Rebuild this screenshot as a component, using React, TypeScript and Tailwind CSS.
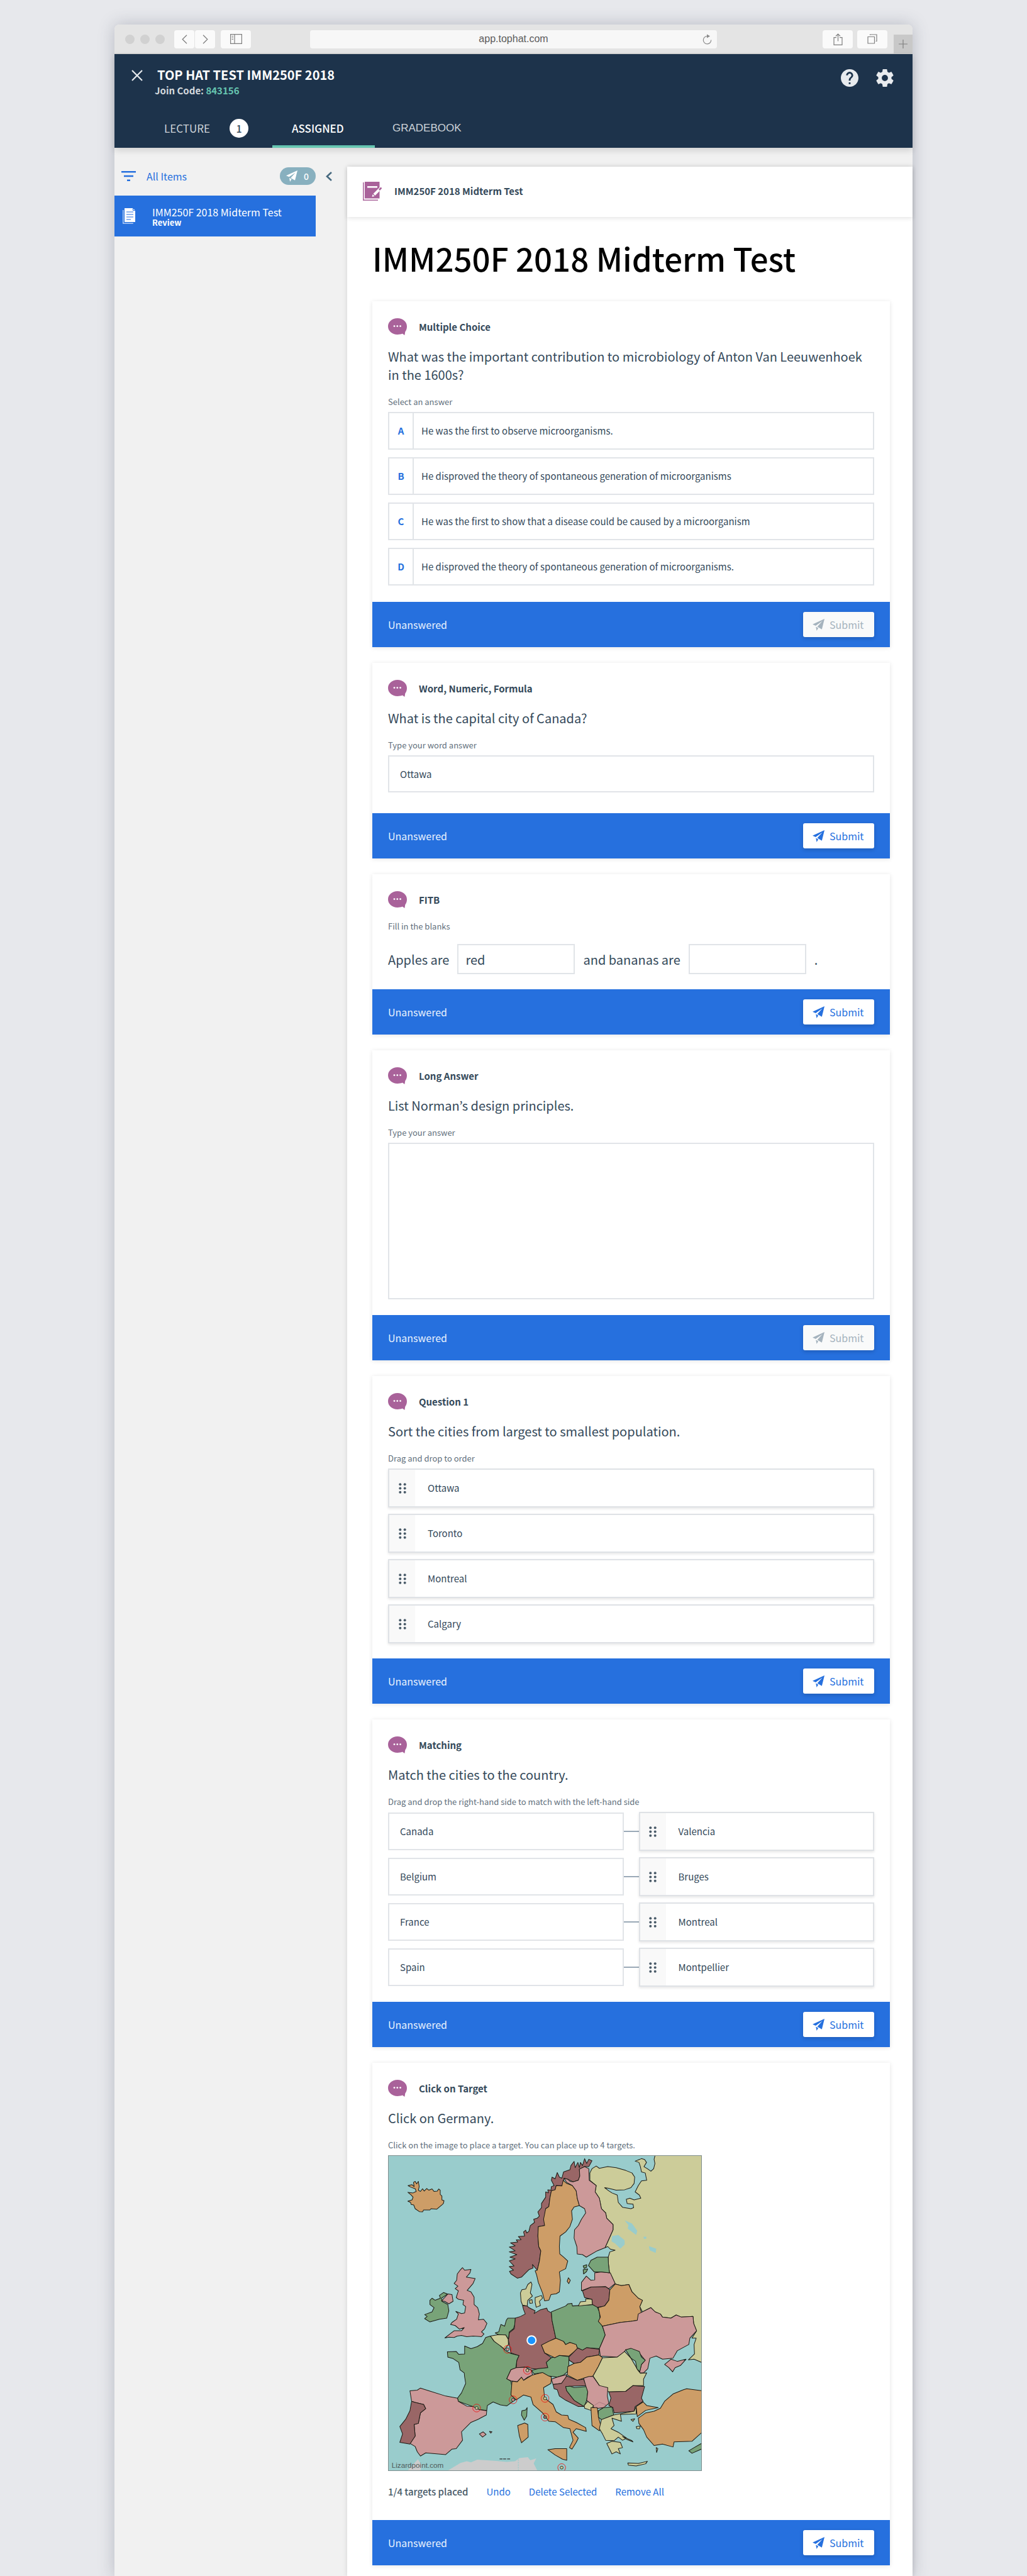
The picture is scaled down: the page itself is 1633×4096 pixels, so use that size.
import { useState, type ReactNode } from "react";

const SANS = "font-['Noto_Sans_CJK_KR',sans-serif]";
const SYSTEM = "font-['Liberation_Sans',sans-serif]";
const FIELD = "border-2 border-[#e1e4e8] bg-white text-[#34495a]";

/* ---------- icons ---------- */

function Plane({ className }: { className: string }) {
  return (
    <svg viewBox="0 0 20 20" className={className} fill="currentColor" aria-hidden="true">
      <path d="M20 0 0 9.2l5.2 2.3L16.4 3.8 8 13.2l7.6 4.3z" />
      <path d="M5.6 13.2 6.8 20l2.8-4.6z" />
    </svg>
  );
}

function Bubble() {
  return (
    <svg viewBox="0 0 30 27" className="h-[27px] w-[30px] shrink-0" aria-hidden="true">
      <path
        fill="#a9629a"
        d="M15 0c8.300 0 15 5.600 15 13 0 3.600-1 6.400-2.700 8.600L26.400 27l-3.600-2.400C20.500 25.600 17.800 26 15 26 6.700 26 0 20.400 0 13S6.700 0 15 0z"
      />
      <circle cx="10" cy="12.600" r="1.400" fill="#fff" />
      <circle cx="14.800" cy="12.600" r="1.400" fill="#fff" />
      <circle cx="19.600" cy="12.600" r="1.400" fill="#fff" />
    </svg>
  );
}

function Grip() {
  return (
    <svg viewBox="0 0 12 17" className="h-[17px] w-3" fill="#4a5b69" aria-hidden="true">
      {[2.3, 8.5, 14.7].map((y) => (
        <g key={y}>
          <circle cx="2.300" cy={y} r="2" />
          <circle cx="9.700" cy={y} r="2" />
        </g>
      ))}
    </svg>
  );
}

/* ---------- browser frame ---------- */

function ChromeButton({ label, className, children }: { label: string; className: string; children: ReactNode }) {
  return (
    <button
      aria-label={label}
      className={`flex h-[29px] items-center justify-center rounded-[4px] bg-[#fafafa] text-[#808080] ${className}`}
    >
      {children}
    </button>
  );
}

function Toolbar() {
  return (
    <div className="flex h-[47px] items-center rounded-t-[8px] border-b border-[#cfcfcf] bg-[#e4e4e4]">
      <div className="flex flex-1 items-center">
        <div className="ml-[17px] flex gap-[9px]">
          <span className="size-[15px] rounded-full bg-[#d1d1d1]" />
          <span className="size-[15px] rounded-full bg-[#d1d1d1]" />
          <span className="size-[15px] rounded-full bg-[#d1d1d1]" />
        </div>
        <div className="ml-[15px] flex gap-px">
          <ChromeButton label="Back" className="w-8">
            <svg viewBox="0 0 9 15" className="h-[15px] w-[9px]" fill="none" stroke="currentColor" strokeWidth="1.300">
              <path d="M8 .7 1.200 7.500 8 14.300" />
            </svg>
          </ChromeButton>
          <ChromeButton label="Forward" className="w-8">
            <svg viewBox="0 0 9 15" className="h-[15px] w-[9px]" fill="none" stroke="currentColor" strokeWidth="1.300">
              <path d="M1 .7 7.800 7.500 1 14.300" />
            </svg>
          </ChromeButton>
        </div>
        <ChromeButton label="Sidebar" className="ml-[9px] w-12">
          <svg viewBox="0 0 19 16" className="h-4 w-[19px]" fill="none" stroke="currentColor" strokeWidth="1.200">
            <path d="M.6.6h17.800v14.800H.6zM7 .6v14.800M2.500 3.500h2.500M2.500 6h2.500M2.500 8.500h2.500" />
          </svg>
        </ChromeButton>
      </div>
      <div className="relative flex h-[29px] w-[51%] items-center justify-center rounded-[4px] bg-[#f7f7f7]">
        <span className={`${SYSTEM} text-[16px] leading-5 text-[#5c5c5c]`}>app.tophat.com</span>
        <button aria-label="Reload" className="absolute right-2 text-[#8a8a8a]">
          <svg viewBox="0 0 15 17" className="h-[17px] w-[15px]" fill="none" stroke="currentColor" strokeWidth="1.200">
            <path d="M7.500 3.500A6.200 6.200 0 1 0 13.700 9.500" />
            <path d="M7 .5 12 3.500 7 6.500z" fill="currentColor" stroke="none" />
          </svg>
        </button>
      </div>
      <div className="flex h-full flex-1 items-center justify-end">
        <ChromeButton label="Share" className="w-12">
          <svg viewBox="0 0 15 19" className="h-[19px] w-[15px]" fill="none" stroke="currentColor" strokeWidth="1.200">
            <path d="M5 6.600H1v11.700h13V6.600h-4M7.500 12.500V1M4 4.500 7.500 1 11 4.500" />
          </svg>
        </ChromeButton>
        <ChromeButton label="Tabs" className="ml-[7px] w-12">
          <svg viewBox="0 0 16 16" className="size-4" fill="none" stroke="currentColor" strokeWidth="1.200">
            <path d="M1 4.500h10.500V15H1zM4.500 2V1H15v10.500h-1.500" />
          </svg>
        </ChromeButton>
        <button
          aria-label="New tab"
          className="ml-[10px] flex h-[30px] w-[30px] items-center justify-center self-end bg-[#c8c8c8] text-[#808080]"
        >
          <svg viewBox="0 0 14 14" className="size-[14px]" stroke="currentColor" strokeWidth="1.200">
            <path d="M7 0v14M0 7h14" />
          </svg>
        </button>
      </div>
    </div>
  );
}

function AppHeader() {
  return (
    <header className="relative z-10 flex h-[149px] flex-col justify-between bg-[#1d334b] shadow-[0_4px_10px_rgba(0,0,0,0.14)]">
      <div className="flex justify-between pl-[27px] pr-[30px] pt-[22px]">
        <div className="flex">
          <button aria-label="Close" className="mt-[3px] h-[18px] w-[18px] text-[#e8ebee]">
            <svg viewBox="0 0 18 18" className="size-[18px]" stroke="currentColor" strokeWidth="2.200">
              <path d="M1 1l16 16M17 1 1 17" />
            </svg>
          </button>
          <div className="ml-[19px]">
            <h1 className="pl-1 text-[20px] font-bold leading-[22px] text-white">TOP HAT TEST IMM250F 2018</h1>
            <p className="mt-1 text-[15px] font-bold leading-5 text-[#d3d8dd]">
              Join Code: <span className="text-[#66c5b0]">843156</span>
            </p>
          </div>
        </div>
        <div className="flex gap-7 pt-[2px] text-[#e8ebee]">
          <button aria-label="Help" className="size-[28px] self-start">
            <svg viewBox="2 2 20 20" className="size-[28px]" fill="currentColor">
              <path d="M12 2C6.480 2 2 6.480 2 12s4.480 10 10 10 10-4.480 10-10S17.520 2 12 2zm1 17h-2v-2h2v2zm2.070-7.750-.9.920C13.450 12.900 13 13.500 13 15h-2v-.5c0-1.100.450-2.100 1.170-2.830l1.240-1.260c.370-.360.590-.860.590-1.410 0-1.100-.9-2-2-2s-2 .9-2 2H8c0-2.210 1.790-4 4-4s4 1.790 4 4c0 .880-.360 1.680-.930 2.250z" />
            </svg>
          </button>
          <button aria-label="Settings" className="size-[28px] self-start">
            <svg viewBox="2 2 20 20" className="size-[28px]" fill="currentColor">
              <path d="M19.430 12.980c.040-.320.070-.640.070-.980s-.030-.660-.070-.980l2.110-1.650c.190-.150.240-.420.120-.640l-2-3.460c-.120-.220-.390-.300-.610-.220l-2.490 1c-.520-.400-1.080-.730-1.690-.980l-.380-2.650C14.460 2.180 14.250 2 14 2h-4c-.250 0-.460.180-.490.420l-.380 2.650c-.610.250-1.170.590-1.690.980l-2.490-1c-.230-.090-.490 0-.610.220l-2 3.460c-.130.220-.070.490.120.640l2.110 1.650c-.040.320-.070.650-.070.980s.030.660.070.980l-2.110 1.650c-.190.150-.240.420-.120.640l2 3.460c.120.220.390.300.610.220l2.490-1c.520.400 1.080.730 1.690.980l.380 2.650c.030.240.240.420.490.420h4c.250 0 .460-.180.490-.420l.380-2.650c.610-.250 1.170-.590 1.690-.980l2.490 1c.230.090.490 0 .610-.220l2-3.460c.120-.220.070-.490-.120-.640l-2.110-1.650zM12 15.500c-1.930 0-3.500-1.570-3.500-3.500s1.570-3.500 3.500-3.500 3.500 1.570 3.500 3.500-1.570 3.500-3.500 3.500z" />
            </svg>
          </button>
        </div>
      </div>
      <nav className="flex h-[62px] pl-[79px] text-[17px] leading-6">
        <a href="#lecture" className="flex w-[172px] items-center justify-between pr-[38px] text-[#cdd3d9]">
          LECTURE
          <span className="flex size-[30px] items-center justify-center rounded-full bg-white text-[16px] font-medium leading-6 text-[#34495a]">
            1
          </span>
        </a>
        <a
          href="#assigned"
          className="flex w-[163px] items-center border-b-4 border-[#66c5b0] pl-[31px] pt-1 font-medium text-white"
        >
          ASSIGNED
        </a>
        <a href="#gradebook" className={`${SYSTEM} flex items-center pl-7 text-[#cdd3d9]`}>
          GRADEBOOK
        </a>
      </nav>
    </header>
  );
}

function Sidebar() {
  return (
    <aside className="w-[370px] shrink-0 pt-[31px]">
      <div className="flex h-[28px] items-center pl-[11px]">
        <svg viewBox="0 0 23 16" className="h-4 w-[23px]" fill="#2670de" aria-hidden="true">
          <path d="M0 0h23v2.600H0zM4 6.700h15v2.600H4zM9 13.400h5V16H9z" />
        </svg>
        <a href="#items" className="ml-[17px] flex-1 text-[16px] leading-6 text-[#2670de]">
          All Items
        </a>
        <span className="flex h-[28px] w-[57px] items-center justify-between rounded-full bg-[#88b0bf] pl-[10px] pr-[11px] text-[14px] font-medium leading-5 text-white">
          <Plane className="size-[18px]" />0
        </span>
        <button aria-label="Collapse" className="ml-4 mr-[24px] text-[#46697f]">
          <svg viewBox="0 0 10 15" className="h-[15px] w-[10px]" fill="none" stroke="currentColor" strokeWidth="2.600">
            <path d="M9 1 2 7.500 9 14" />
          </svg>
        </button>
      </div>
      <a href="#midterm" className="mt-[17px] flex h-[65px] w-[320px] items-center bg-[#2670de] pl-[13px] text-white">
        <svg viewBox="0 0 20 25" className="h-[25px] w-5 shrink-0" aria-hidden="true">
          <path d="M.8 3v21.200h16" fill="none" stroke="#cfe0fa" strokeWidth="1.200" />
          <path d="M3 0h13l4 3.500V22H3z" fill="#fff" />
          <path d="M6 6h11M6 10h11M6 14h11M6 18h7" stroke="#6d9fec" strokeWidth="1.400" />
          <path d="M16.500 0v3.500H20" fill="none" stroke="#2670de" strokeWidth="1" />
        </svg>
        <span className="ml-[27px] flex flex-col">
          <span className="text-[16px] leading-5">IMM250F 2018 Midterm Test</span>
          <span className="text-[13px] font-bold leading-[14px]">Review</span>
        </span>
      </a>
    </aside>
  );
}

/* ---------- questions ---------- */

function Card({
  title,
  question,
  hint,
  hintFor,
  disabled = false,
  bodyClass,
  children,
}: {
  title: string;
  question?: string;
  hint: string;
  hintFor?: string;
  disabled?: boolean;
  bodyClass: string;
  children: ReactNode;
}) {
  const hintClass = "block text-[13px] leading-5 text-[#5f6f7c]";
  return (
    <section className="bg-white shadow-[0_1px_7px_rgba(0,0,0,0.11)]">
      <div className={`px-[25px] pt-[27px] ${bodyClass}`}>
        <div className="flex h-[27px] items-center gap-[19px]">
          <Bubble />
          <h3 className="text-[15px] font-bold leading-5 text-[#34495a]">{title}</h3>
        </div>
        {question && <p className="mt-[19px] text-[20px] leading-[29px] text-[#34495a]">{question}</p>}
        {hintFor ? (
          <label htmlFor={hintFor} className={`mt-[19px] ${hintClass}`}>
            {hint}
          </label>
        ) : (
          <p className={`mt-[19px] ${hintClass}`}>{hint}</p>
        )}
        {children}
      </div>
      <footer className="flex h-[72px] items-center justify-between bg-[#2670de] px-[25px]">
        <span className="text-[16px] leading-6 text-[#eaf2fd]">Unanswered</span>
        {disabled ? (
          <button
            disabled
            className="flex h-10 w-[113px] items-center gap-2 rounded-[3px] bg-[#f9fafa] pl-[15px] text-[16px] leading-6 text-[#a5b3be] shadow-[0_2px_6px_rgba(0,0,0,0.18)]"
          >
            <Plane className="size-[19px]" />
            Submit
          </button>
        ) : (
          <button className="flex h-10 w-[113px] items-center gap-2 rounded-[3px] bg-white pl-[15px] text-[16px] leading-6 text-[#2670de] shadow-[0_2px_6px_rgba(0,0,0,0.18)]">
            <Plane className="size-[19px]" />
            Submit
          </button>
        )}
      </footer>
    </section>
  );
}

const CHOICES = [
  ["A", "He was the first to observe microorganisms."],
  ["B", "He disproved the theory of spontaneous generation of microorganisms"],
  ["C", "He was the first to show that a disease could be caused by a microorganism"],
  ["D", "He disproved the theory of spontaneous generation of microorganisms."],
];

function Draggable({ name }: { name: string }) {
  return (
    <div
      draggable
      className="flex h-[62px] items-stretch border-2 border-[#dfe2e6] bg-white shadow-[0_2px_4px_rgba(0,0,0,0.1)]"
    >
      <span className="flex w-[41px] items-center justify-center bg-[#f9f9f9]">
        <Grip />
      </span>
      <span className="self-center pl-5 text-[15px] leading-6 text-[#34495a]">{name}</span>
    </div>
  );
}

const PAIRS = [
  ["Canada", "Valencia"],
  ["Belgium", "Bruges"],
  ["France", "Montreal"],
  ["Spain", "Montpellier"],
];

/* ---------- map ---------- */

const OLIVE = "#cccc99";
const PINK = "#cc9999";
const MAROON = "#996666";
const GREEN = "#78a378";
const ORANGE = "#cd9d67";

const LANDS: [string, string][] = [
  [ORANGE, "131,190 150,186 160,195 157,175 165,170 172,182 180,170 184,195 180,212 190,218 200,205 208,216 220,204 230,212 245,206 255,218 270,216 277,206 284,212 284,232 292,240 292,258 302,262 299,275 292,282 268,302 240,300 235,306 205,306 200,315 185,314 165,300 158,282 146,280 143,270 130,264 150,258 155,245 145,234 130,222 155,225 170,218 165,205 145,198"],
  [OLIVE, "1305,45 1300,65 1304,85 1298,110 1285,122 1268,110 1252,100 1264,80 1255,66 1240,62 1210,74 1228,80 1235,100 1240,125 1258,130 1265,165 1240,168 1225,190 1210,220 1230,235 1237,250 1205,258 1185,250 1168,255 1172,275 1200,278 1203,295 1190,300 1150,293 1130,270 1125,235 1100,225 1085,215 1065,200 1080,202 1120,212 1160,210 1190,200 1205,180 1208,150 1195,130 1165,118 1120,105 1080,100 1040,108 1025,97 1005,110 995,130 995,165 1025,190 1020,220 1040,250 1050,300 1070,320 1075,345 1105,375 1105,400 1085,445 1067,485 1080,480 1092,492 1115,497 1090,505 1082,530 1083,560 1088,602 1100,625 1115,658 1145,665 1180,660 1195,695 1225,725 1245,735 1232,765 1245,790 1285,770 1305,790 1330,800 1340,815 1380,820 1405,805 1430,815 1485,812 1488,845 1502,880 1480,915 1500,915 1490,945 1492,990 1463,1018 1490,1015 1530,1032 1530,45"],
  [MAROON, "1005,72 990,100 970,100 945,112 947,145 940,165 915,172 890,160 872,155 865,190 835,190 830,210 812,215 805,250 800,290 785,300 780,380 750,385 748,430 752,480 762,500 755,550 745,592 722,565 725,582 705,590 690,605 670,625 650,630 620,610 613,597 632,592 612,575 635,572 612,548 640,538 615,530 648,518 612,505 640,500 612,482 640,476 618,462 652,458 645,448 668,447 655,432 685,430 680,410 690,402 695,415 705,408 712,380 732,365 728,350 745,345 755,335 748,315 765,295 765,275 785,245 785,220 798,225 795,210 810,212 812,195 825,190 812,165 815,150 830,158 840,128 850,150 862,155 870,125 900,115 905,95 920,75 925,105 938,80 945,105 950,80 960,95 970,62 980,85 990,65"],
  [ORANGE, "868,165 885,180 912,190 930,215 935,250 945,285 920,292 908,310 912,350 900,385 880,410 853,430 850,480 852,515 870,530 890,548 880,585 850,600 855,640 850,695 835,704 810,708 800,735 780,738 770,700 750,650 742,615 735,595 745,592 755,550 762,500 752,480 748,430 750,385 780,380 775,350 785,300 800,290 805,250 812,215 830,210 835,190 862,192"],
  [ORANGE, "893,628 902,640 895,656 887,645"],
  [PINK, "945,112 970,100 990,110 992,165 1025,190 1020,220 1040,250 1050,300 1070,320 1075,345 1105,375 1105,400 1085,445 1067,485 1030,500 978,530 960,518 935,515 933,480 920,440 922,400 940,380 955,350 975,320 970,300 945,285 935,250 930,215 912,190 885,175 872,155 890,160 900,170 915,172 940,165 947,145"],
  [PINK, "390,580 400,592 430,588 425,605 408,625 450,632 440,655 412,688 430,695 445,720 445,755 462,770 470,800 465,828 490,825 506,845 495,870 480,885 492,895 480,908 440,905 410,908 385,902 365,905 350,912 325,910 306,914 330,895 350,880 385,880 398,865 375,872 355,855 333,850 340,840 362,825 370,800 358,788 385,798 400,795 405,765 392,755 395,735 370,730 360,722 370,690 355,680 368,668 350,655 362,640 365,610 380,590"],
  [GREEN, "280,712 300,698 318,705 305,715 290,725 292,740 320,755 325,785 315,820 280,825 235,838 210,822 222,812 210,803 245,790 255,770 235,755 235,735 245,725 260,735 285,725"],
  [PINK, "290,738 305,722 320,705 340,708 345,740 325,752 305,740"],
  [OLIVE, "715,648 720,660 712,700 722,715 700,735 697,762 675,758 668,740 665,700 672,685 690,682 700,660"],
  [OLIVE, "735,722 765,712 770,725 755,740 760,760 740,768 735,745"],
  [OLIVE, "708,735 720,732 722,748 710,750"],
  [MAROON, "675,760 697,762 705,770 735,785 730,798 760,780 790,772 795,785 812,795 815,830 833,915 800,930 765,948 780,985 812,1008 788,1030 795,1055 745,1062 720,1060 700,1052 645,1055 648,1020 658,998 620,985 615,960 608,925 612,890 636,870 640,820 665,812 688,800 680,780"],
  [GREEN, "605,820 640,820 638,850 632,870 612,885 608,920 595,900 560,898 545,890 562,885 572,850 590,858 598,830"],
  [OLIVE, "522,905 560,898 595,900 607,920 608,945 590,968 570,952 560,950 540,930"],
  [GREEN, "522,905 540,930 570,952 595,975 620,988 658,998 648,1020 643,1058 620,1065 600,1108 620,1120 625,1150 620,1185 645,1205 630,1215 600,1237 570,1232 535,1218 508,1235 505,1258 470,1255 440,1240 370,1215 366,1200 385,1175 405,1130 400,1100 398,1080 378,1065 372,1030 345,1012 320,1005 318,980 360,978 372,992 400,990 400,952 430,965 460,955 485,940 500,912"],
  [PINK, "140,1165 175,1162 190,1152 230,1165 310,1190 366,1200 370,1215 410,1238 440,1240 470,1255 505,1260 503,1280 465,1300 430,1315 385,1360 390,1400 360,1440 340,1442 310,1468 215,1460 190,1475 175,1455 165,1430 140,1415 165,1380 160,1325 180,1320 190,1270 215,1250 205,1230 165,1220 148,1215"],
  [MAROON, "148,1215 165,1220 205,1230 215,1250 190,1270 180,1320 160,1325 165,1380 140,1418 92,1410 105,1370 92,1335 120,1300 140,1260"],
  [ORANGE, "625,1120 650,1122 670,1100 680,1115 722,1090 770,1078 812,1100 810,1130 775,1150 780,1200 820,1230 835,1265 860,1280 890,1282 895,1300 930,1315 975,1340 978,1358 930,1345 915,1362 940,1390 930,1410 910,1442 898,1435 915,1400 900,1345 870,1340 830,1312 800,1310 770,1270 725,1230 715,1195 680,1185 645,1208 620,1185"],
  [ORANGE, "795,1445 830,1440 885,1440 885,1495 865,1490 830,1470"],
  [ORANGE, "652,1330 685,1318 700,1325 702,1385 670,1412 660,1380"],
  [GREEN, "697,1245 695,1285 683,1305 670,1280 672,1260 690,1256"],
  [PINK, "470,1370 488,1360 502,1372 485,1385"],
  [PINK, "518,1358 530,1360 524,1366"],
  [PINK, "600,1108 620,1065 645,1055 690,1053 718,1068 722,1090 700,1100 680,1115 670,1100 650,1122 620,1118"],
  [GREEN, "718,1068 750,1060 795,1055 788,1030 812,1008 850,997 895,1003 895,1045 888,1075 870,1090 840,1100 800,1095 770,1078 730,1085"],
  [ORANGE, "765,948 800,930 835,915 870,930 880,945 900,935 930,945 937,965 895,1000 850,997 828,1008 780,985"],
  [GREEN, "812,790 880,762 890,752 910,750 912,762 1025,755 1040,790 1045,840 1055,860 1068,900 1040,965 980,960 960,972 935,960 930,945 900,935 880,945 870,930 833,915 815,830"],
  [OLIVE, "940,762 950,742 975,740 975,728 1005,730 1007,755"],
  [MAROON, "960,690 1000,672 1070,670 1090,685 1085,735 1065,762 1030,768 1007,755 1005,730 970,722"],
  [PINK, "955,690 955,650 978,620 1000,640 1018,638 1018,605 1050,600 1092,605 1115,655 1085,680 1070,670 1000,672"],
  [GREEN, "988,570 1000,545 1030,530 1082,530 1083,560 1088,605 1050,600 1015,600"],
  [GREEN, "963,572 980,566 980,578 968,584"],
  [GREEN, "963,590 985,586 978,600 965,610"],
  [ORANGE, "1090,685 1115,658 1145,665 1180,660 1195,695 1225,725 1245,735 1232,765 1240,795 1220,830 1190,835 1140,840 1055,858 1035,835 1045,815 1035,770 1065,762 1085,735"],
  [PINK, "1055,858 1140,840 1190,835 1220,830 1225,800 1285,770 1305,790 1330,800 1340,815 1380,820 1405,805 1430,815 1485,812 1488,845 1502,880 1470,915 1465,945 1410,975 1390,1010 1340,1015 1310,1000 1280,1010 1270,1060 1250,1080 1230,1080 1240,1040 1258,1020 1225,980 1165,970 1155,985 1125,1005 1045,1000 1040,965 1068,900"],
  [PINK, "1350,1040 1380,1015 1410,1025 1452,1015 1425,1045 1400,1055 1388,1075 1370,1055"],
  [MAROON, "895,1005 937,962 960,972 980,960 1040,968 1038,995 980,1005 950,1030 920,1035 897,1020"],
  [ORANGE, "890,1050 920,1035 950,1030 980,1005 1038,995 1055,1008 1035,1050 1010,1095 965,1105 935,1115 888,1090"],
  [OLIVE, "1055,1008 1125,1005 1160,978 1190,1010 1225,1070 1235,1082 1265,1080 1250,1110 1250,1140 1200,1140 1165,1168 1085,1170 1040,1140 1010,1095 1035,1050"],
  [GREEN, "1165,970 1190,963 1230,978 1240,1005 1258,1020 1240,1040 1232,1075 1218,1060 1212,1025 1190,1010"],
  [PINK, "812,1110 840,1100 885,1088 880,1105 860,1130 820,1135"],
  [MAROON, "820,1135 860,1130 885,1095 935,1115 965,1110 978,1140 900,1143 880,1145 885,1165 920,1210 968,1240 940,1240 880,1210 850,1190 840,1160 825,1155"],
  [GREEN, "880,1145 900,1143 920,1150 980,1145 985,1170 980,1210 968,1240 920,1210 885,1165"],
  [PINK, "965,1105 990,1097 1010,1097 1040,1140 1080,1150 1078,1190 1085,1225 1060,1245 1020,1250 1000,1230 980,1210 985,1170 975,1140"],
  [OLIVE, "968,1235 985,1215 1012,1235 1000,1258 970,1248"],
  [ORANGE, "1000,1245 1030,1245 1038,1300 1048,1335 1040,1355 1005,1330"],
  [GREEN, "1035,1260 1060,1245 1100,1242 1108,1280 1050,1302 1035,1290"],
  [MAROON, "1085,1170 1165,1168 1200,1140 1255,1145 1240,1200 1248,1215 1210,1240 1205,1262 1110,1270 1105,1245 1085,1235 1095,1200"],
  [OLIVE, "1050,1302 1108,1280 1205,1262 1215,1240 1215,1275 1140,1278 1145,1310 1100,1295 1110,1330 1095,1345 1130,1362 1170,1390 1150,1400 1130,1385 1110,1402 1070,1400 1055,1370 1040,1345"],
  [OLIVE, "1075,1415 1100,1405 1140,1410 1150,1435 1130,1440 1140,1465 1120,1455 1100,1465"],
  [OLIVE, "1150,1382 1195,1402 1200,1408 1170,1396"],
  [OLIVE, "1175,1508 1225,1510 1268,1500 1260,1512 1215,1522 1178,1518"],
  [OLIVE, "1215,1335 1235,1332 1230,1346 1218,1345"],
  [OLIVE, "1190,1302 1208,1298 1200,1310"],
  [OLIVE, "1310,1435 1318,1440 1312,1458"],
  [ORANGE, "1215,1240 1248,1218 1265,1235 1320,1245 1260,1258 1220,1288"],
  [ORANGE, "1225,1295 1260,1270 1300,1262 1330,1248 1350,1215 1390,1180 1440,1160 1455,1155 1490,1160 1530,1165 1530,1360 1480,1405 1395,1408 1390,1432 1340,1418 1300,1425 1265,1385 1250,1350 1228,1320"],
  [GREEN, "1465,1450 1490,1435 1530,1412 1530,1440 1480,1462"],
];

const LAKES = [
  "1100,430 1130,425 1160,450 1160,470 1140,490 1115,465 1098,455",
  "1160,355 1195,370 1220,405 1215,425 1175,395 1178,378",
  "1275,478 1310,490 1308,510 1280,498",
  "1250,433 1263,433 1263,443 1251,443",
];

const MICROSTATES: { name: string; x: number; y: number; fill: string }[] = [
  { name: "Luxembourg", x: 604, y: 968, fill: PINK },
  { name: "Liechtenstein", x: 698, y: 1068, fill: OLIVE },
  { name: "Monaco", x: 630, y: 1208, fill: PINK },
  { name: "Andorra", x: 457, y: 1247, fill: OLIVE },
  { name: "San Marino", x: 782, y: 1201, fill: OLIVE },
  { name: "Vatican City", x: 782, y: 1290, fill: MAROON },
  { name: "Malta", x: 861, y: 1530, fill: OLIVE },
];

function EuropeMap() {
  return (
    <svg
      viewBox="39 49 1485 1495"
      role="img"
      aria-label="Map of Europe"
      className="block h-auto w-full max-w-[499px] border border-[#808f8f] bg-[#99cccc]"
    >
      <path fill="#cccccc" d="M130 1544 178 1490 197 1520 190 1544zM320 1544 380 1508 410 1500 430 1505 460 1492 550 1498 600 1503 640 1500 660 1485 700 1480 712 1495 740 1486 728 1510 745 1544z" />
      <path d="M655 1490v54" stroke="#99cccc" strokeWidth="3" strokeDasharray="8 4" />
      <path d="M566 1489h14M583 1489h14M602 1489h14" stroke="#333" strokeWidth="4" />
      <g stroke="#1c1a14" strokeWidth="3" strokeLinejoin="round">
        {LANDS.map(([fill, points]) => (
          <polygon key={points} fill={fill} points={points} />
        ))}
      </g>
      <path d="M1015 1235l25-16 30 12-8 14" fill="none" stroke="#9a6b70" strokeWidth="2" />
      {LAKES.map((points) => (
        <polygon key={points} fill="#99cccc" points={points} />
      ))}
      {MICROSTATES.map(({ name, x, y, fill }) => (
        <g key={name}>
          <circle cx={x} cy={y} r="7" fill={fill} stroke="#1c1a14" strokeWidth="2.500" />
          <circle cx={x} cy={y} r="18.500" fill="none" stroke="#ee1111" strokeWidth="2.500" />
        </g>
      ))}
      <circle cx="718" cy="925" r="21" fill="#1a94ff" stroke="#fff" strokeWidth="6" />
      <text x="53" y="1531" fontSize="35" fontFamily="Liberation Sans, sans-serif" fill="#4f5b5b">
        Lizardpoint.com
      </text>
    </svg>
  );
}

/* ---------- page ---------- */

export default function App() {
  const [choice, setChoice] = useState("");
  return (
    <div className={`${SANS} flex min-h-screen flex-col bg-[#e7e8ec] px-[182px] pt-[39px]`}>
      <div className="flex flex-1 flex-col rounded-t-[8px] bg-[#f1f1f1] shadow-[0_0_26px_rgba(60,70,90,0.28)]">
        <Toolbar />
        <AppHeader />
        <div className="flex flex-1">
          <Sidebar />
          <main className="mt-[30px] min-w-0 flex-1 bg-white shadow-[0_0_8px_rgba(0,0,0,0.12)]">
            <div className="flex h-[80px] items-center bg-white pb-[2px] pl-[25px] shadow-[0_2px_7px_rgba(0,0,0,0.11)]">
              <svg viewBox="0 0 30 30" className="size-[30px]" aria-hidden="true">
                <path d="M.8 1v28.200H24" fill="none" stroke="#a9629a" strokeWidth="1.500" />
                <path d="M3 0h23.500v26.500H3z" fill="#a9629a" />
                <path d="M7 7h16v2.600H7z" fill="#fff" />
                <path d="M29.500 9 18 20.500" stroke="#fff" strokeWidth="4" />
                <path d="M14.500 24l1-4 3 3z" fill="#fff" />
                <path d="M29.500 9.500 26 13" stroke="#a9629a" strokeWidth="2.600" />
              </svg>
              <h2 className="ml-5 text-[15px] font-bold leading-6 text-[#34495a]">IMM250F 2018 Midterm Test</h2>
            </div>
            <div className="pb-[18px] pl-10 pr-9 pt-[35px]">
              <h2 className="text-[51px] font-medium leading-[60px] text-black">IMM250F 2018 Midterm Test</h2>
              <div className="mt-[39px] flex flex-col gap-[25px]">
                <Card
                  title="Multiple Choice"
                  question="What was the important contribution to microbiology of Anton Van Leeuwenhoek in the 1600s?"
                  hint="Select an answer"
                  disabled
                  bodyClass="pb-[26px]"
                >
                  <div role="radiogroup" aria-label="Select an answer" className="mt-[6px] flex flex-col gap-3">
                    {CHOICES.map(([letter, text]) => (
                      <label key={letter} className={`relative flex h-[60px] items-stretch ${FIELD}`}>
                        <input
                          type="radio"
                          name="contribution"
                          className="sr-only"
                          checked={choice === letter}
                          onChange={() => setChoice(letter)}
                        />
                        <span className="flex w-[39px] items-center justify-center border-r-2 border-[#e1e4e8] text-[15px] font-bold text-[#2670de]">
                          {letter}
                        </span>
                        <span className="self-center pl-3 text-[15px] leading-6">{text}</span>
                      </label>
                    ))}
                  </div>
                </Card>

                <Card
                  title="Word, Numeric, Formula"
                  question="What is the capital city of Canada?"
                  hint="Type your word answer"
                  hintFor="capital"
                  bodyClass="pb-[33px]"
                >
                  <input
                    id="capital"
                    defaultValue="Ottawa"
                    className={`mt-[6px] block h-[59px] w-full px-[17px] text-[15px] leading-6 ${FIELD}`}
                  />
                </Card>

                <Card title="FITB" hint="Fill in the blanks" bodyClass="pb-6">
                  <div className="mt-[18px] flex items-center gap-[13px] text-[20px] leading-[29px] text-[#34495a]">
                    <label htmlFor="blank-apples">Apples are</label>
                    <input id="blank-apples" defaultValue="red" className={`h-[48px] w-[187px] px-[11px] ${FIELD}`} />
                    <label htmlFor="blank-bananas">and bananas are</label>
                    <input id="blank-bananas" className={`h-[48px] w-[187px] px-[11px] ${FIELD}`} />
                    <span>.</span>
                  </div>
                </Card>

                <Card
                  title="Long Answer"
                  question="List Norman’s design principles."
                  hint="Type your answer"
                  hintFor="principles"
                  disabled
                  bodyClass="pb-[25px]"
                >
                  <textarea
                    id="principles"
                    className={`mt-[6px] block h-[249px] w-full resize-none p-4 text-[15px] leading-6 ${FIELD}`}
                  />
                </Card>

                <Card
                  title="Question 1"
                  question="Sort the cities from largest to smallest population."
                  hint="Drag and drop to order"
                  bodyClass="pb-6"
                >
                  <ul className="mt-[6px] flex flex-col gap-[10px]">
                    {["Ottawa", "Toronto", "Montreal", "Calgary"].map((city) => (
                      <li key={city}>
                        <Draggable name={city} />
                      </li>
                    ))}
                  </ul>
                </Card>

                <Card
                  title="Matching"
                  question="Match the cities to the country."
                  hint="Drag and drop the right-hand side to match with the left-hand side"
                  bodyClass="pb-6"
                >
                  <ul className="mt-[6px] flex flex-col gap-[10px]">
                    {PAIRS.map(([country, city]) => (
                      <li key={country} className="grid grid-cols-[1fr_24px_1fr] items-center">
                        <span className={`flex h-[60px] items-center pl-[17px] text-[15px] leading-6 ${FIELD}`}>
                          {country}
                        </span>
                        <span className="h-[2px] bg-[#9aa9b7]" />
                        <Draggable name={city} />
                      </li>
                    ))}
                  </ul>
                </Card>

                <Card
                  title="Click on Target"
                  question="Click on Germany."
                  hint="Click on the image to place a target. You can place up to 4 targets."
                  bodyClass="pb-[33px]"
                >
                  <div className="mt-[6px]">
                    <EuropeMap />
                  </div>
                  <div className="mt-[21px] flex h-6 text-[15px] leading-6 text-[#2670de]">
                    <span className="font-medium text-[#4a5b69]">1/4 targets placed</span>
                    <button className="ml-[29px]">Undo</button>
                    <button className="ml-[29px]">Delete Selected</button>
                    <button className="ml-[29px]">Remove All</button>
                  </div>
                </Card>
              </div>
            </div>
          </main>
        </div>
      </div>
    </div>
  );
}
